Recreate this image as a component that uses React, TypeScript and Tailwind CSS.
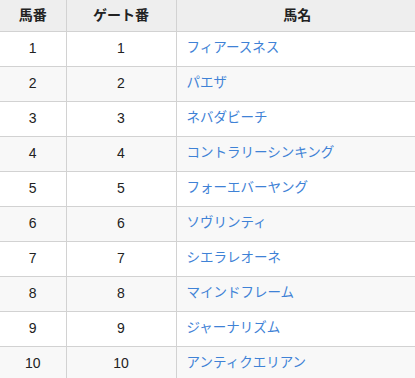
import React from 'react';

const horses = [
    { no: 1, gate: 1, name: 'フィアースネス' },
    { no: 2, gate: 2, name: 'パエザ' },
    { no: 3, gate: 3, name: 'ネバダビーチ' },
    { no: 4, gate: 4, name: 'コントラリーシンキング' },
    { no: 5, gate: 5, name: 'フォーエバーヤング' },
    { no: 6, gate: 6, name: 'ソヴリンティ' },
    { no: 7, gate: 7, name: 'シエラレオーネ' },
    { no: 8, gate: 8, name: 'マインドフレーム' },
    { no: 9, gate: 9, name: 'ジャーナリズム' },
    { no: 10, gate: 10, name: 'アンティクエリアン' },
];

export default function App() {
    return (
        <div className="w-[415px] h-[378px] overflow-hidden bg-white" style={{ fontFamily: '"Liberation Sans", "Noto Sans CJK JP", sans-serif' }}>
            <table className="w-[418px] border-collapse table-fixed text-[14px] text-[#222]">
                <colgroup>
                    <col className="w-[66px]" />
                    <col className="w-[110px]" />
                    <col />
                </colgroup>
                <thead>
                    <tr className="h-[31px] bg-[#eeeeee]">
                        <th className="border-b border-r border-[#d2d2d2] font-bold text-center">馬番</th>
                        <th className="border-b border-r border-[#d2d2d2] font-bold text-center">ゲート番</th>
                        <th className="border-b border-[#d2d2d2] font-bold text-center">馬名</th>
                    </tr>
                </thead>
                <tbody>
                    {horses.map((h, i) => (
                        <tr key={h.no} className={i % 2 === 1 ? 'h-[35px] bg-[#f8f8f8]' : 'h-[35px] bg-white'}>
                            <td className="border-b border-r border-[#d2d2d2] text-center">{h.no}</td>
                            <td className="border-b border-r border-[#d2d2d2] text-center">{h.gate}</td>
                            <td className="border-b border-[#d2d2d2] pl-[10px] text-[13.5px] text-[#3f82d6]">
                                <a href="#">{h.name}</a>
                            </td>
                        </tr>
                    ))}
                </tbody>
            </table>
        </div>
    );
}
